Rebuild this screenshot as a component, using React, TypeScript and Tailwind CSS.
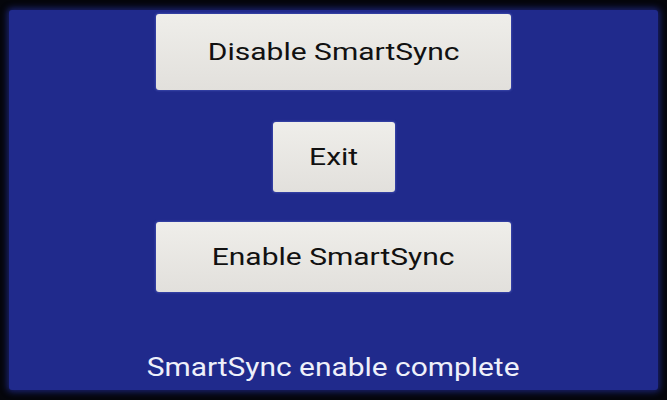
export default function App() {
  return (
    <div className="h-[400px] w-[667px] bg-[#05060c] px-[9px] py-[10px] font-['Roboto',sans-serif]">
      <div className="flex h-full flex-col items-center rounded-[3px] bg-[#202a8c] shadow-[0_0_6px_2px_#1a2270]">
        <button className="mt-[4px] h-[76px] w-[355px] rounded-[3px] bg-gradient-to-b from-[#efeeea] to-[#e2e0dc] text-[24px] text-[#111] shadow-[0_0_2px_1px_#3a46a8]">
          <span className="inline-block scale-x-[1.25]">Disable SmartSync</span>
        </button>
        <button className="mt-[32px] h-[70px] w-[122px] rounded-[3px] bg-gradient-to-b from-[#efeeea] to-[#e2e0dc] text-[24px] text-[#111] shadow-[0_0_2px_1px_#3a46a8]">
          <span className="inline-block scale-x-[1.25]">Exit</span>
        </button>
        <button className="mt-[30px] h-[70px] w-[355px] rounded-[3px] bg-gradient-to-b from-[#efeeea] to-[#e2e0dc] text-[24px] text-[#111] shadow-[0_0_2px_1px_#3a46a8]">
          <span className="inline-block scale-x-[1.25]">Enable SmartSync</span>
        </button>
        <p className="mt-[60px] text-[26px] leading-[30px] text-[#eef0fa]">
          <span className="inline-block scale-x-[1.15]">SmartSync enable complete</span>
        </p>
      </div>
    </div>
  )
}
